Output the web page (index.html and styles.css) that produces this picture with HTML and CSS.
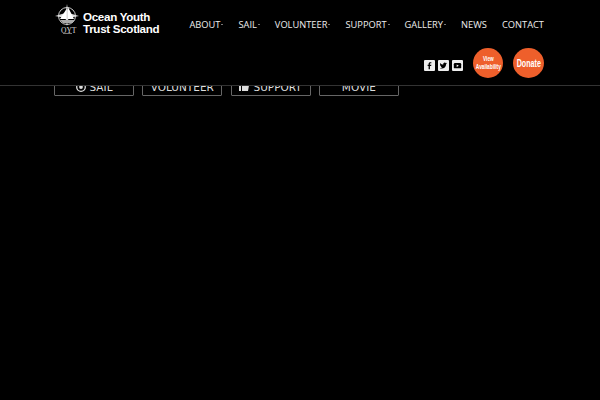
FILE: index.html
```html
<!DOCTYPE html>
<html lang="en">
<head>
  <meta charset="UTF-8">
  <title>Ocean Youth Trust Scotland</title>
  <link rel="stylesheet" href="styles.css">
</head>
<body>

  <header class="site-header">
    <div class="header-top">
      <a href="#" class="logo">
        <svg class="logo-mark" width="28" height="32" viewBox="0 0 28 32">
          <circle cx="13" cy="13" r="8.500" fill="none" stroke="#ccc" stroke-width="1"/>
          <path d="M13 1 L14.500 10 L25 13 L14.500 15 L13 23 L11.500 15 L1 13 L11.500 10 Z" fill="#ddd"/>
          <path d="M6 16 L12.500 6 L12.500 16 Z M14 4 L20 16 L14 16 Z" fill="#fff"/>
          <path d="M6 17 H21 L18 20 H9 Z" fill="#aaa"/>
          <path d="M9 30.500 H18" stroke="#777" stroke-width="1"/>
        </svg>
        <span class="logo-oyt">OYT</span>
        <span class="logo-name">Ocean Youth<br>Trust Scotland</span>
      </a>
      <nav class="main-nav">
        <a href="#" class="has-sub">ABOUT</a>
        <a href="#" class="has-sub">SAIL</a>
        <a href="#" class="has-sub">VOLUNTEER</a>
        <a href="#" class="has-sub">SUPPORT</a>
        <a href="#" class="has-sub">GALLERY</a>
        <a href="#">NEWS</a>
        <a href="#">CONTACT</a>
      </nav>
    </div>
    <div class="header-actions">
      <a href="#" class="social">
        <svg width="9" height="9" viewBox="0 0 11 11"><path d="M6 10V6h1.500l.3-1.500H6V3.600c0-.5.2-.8.8-.8h1V1.500H6.600C5.100 1.500 4.400 2.300 4.400 3.500v1H3.200V6h1.200v4Z" fill="#000"/></svg>
      </a>
      <a href="#" class="social">
        <svg width="9" height="9" viewBox="0 0 11 11"><path d="M10 2.800c-.4.200-.7.300-1.100.3.400-.2.700-.6.800-1-.4.200-.8.400-1.200.5a1.900 1.900 0 0 0-3.300 1.700C3.700 4.200 2.400 3.500 1.500 2.300c-.5.900-.2 2 .6 2.500-.3 0-.6-.1-.8-.2 0 .9.600 1.700 1.500 1.900-.3.100-.6.100-.9 0 .3.800 1 1.300 1.800 1.300-.8.600-1.800.9-2.800.8 2.800 1.700 7.600.5 7.900-4.900.4-.2.700-.6 1-1Z" fill="#000"/></svg>
      </a>
      <a href="#" class="social">
        <svg width="9" height="9" viewBox="0 0 11 11"><rect x="1" y="2.500" width="9" height="6.500" rx="1.500" fill="#000"/><path d="M4.500 4.200v3l2.600-1.500Z" fill="#fff"/></svg>
      </a>
      <a href="#" class="round-btn round-small"><span class="squeeze">View<br>Availability</span></a>
      <a href="#" class="round-btn round-large"><span class="squeeze">Donate</span></a>
    </div>
  </header>

  <div class="button-row">
    <a href="#" class="outline-btn">
      <svg width="10" height="10" viewBox="0 0 10 10"><circle cx="5" cy="5" r="4.300" fill="none" stroke="#ddd" stroke-width="1.300"/><circle cx="5" cy="5" r="1.900" fill="#ddd"/></svg>
      SAIL
    </a>
    <a href="#" class="outline-btn">VOLUNTEER</a>
    <a href="#" class="outline-btn">
      <svg width="10" height="10" viewBox="0 0 10 10"><path d="M0 4h2v5H0ZM3 4l2-3h1v2.500h4L9 9H3Z" fill="#ddd"/></svg>
      SUPPORT
    </a>
    <a href="#" class="outline-btn">MOVIE</a>
  </div>

</body>
</html>
```

FILE: styles.css
```css
body {
  margin: 0;
  background: #000;
  font-family: "DejaVu Sans", sans-serif;
  color: #ddd;
  height: 400px;
  overflow: hidden;
}
a { color: inherit; text-decoration: none; }

.site-header {
  position: absolute;
  top: 0;
  left: 0;
  width: 600px;
  height: 86px;
  box-sizing: border-box;
  padding: 0 56px 0 54px;
  background: #000;
  border-bottom: 1px solid #333;
}
.header-top {
  display: flex;
  justify-content: space-between;
  height: 48px;
}

.logo {
  position: relative;
  display: flex;
  align-items: center;
  width: 106px;
  height: 46px;
}
.logo-mark { flex: none; margin: 0 1px 8px 0; }
.logo-oyt {
  position: absolute;
  left: 7px;
  top: 26px;
  font: 7.500px "Liberation Serif", serif;
}
.logo-name {
  font: bold 11.600px/12px "Liberation Sans", sans-serif;
  letter-spacing: -0.3px;
  color: #fff;
  white-space: nowrap;
}

.main-nav {
  display: flex;
  gap: 15px;
  padding-top: 18px;
  font-family: "Open Sans", sans-serif;
  font-size: 9.300px;
  line-height: 13px;
  color: #eee;
}
.has-sub::after {
  content: "";
  display: inline-block;
  width: 2px;
  height: 1px;
  margin: 0 0 3px 1px;
  background: #777;
}

.header-actions {
  display: flex;
  justify-content: flex-end;
  align-items: center;
  height: 30px;
}
.social {
  display: flex;
  align-items: center;
  justify-content: center;
  width: 11px;
  height: 11px;
  margin: 4px 3px 0 0;
  background: #eee;
  border-radius: 1px;
}
.round-btn {
  display: flex;
  align-items: center;
  justify-content: center;
  width: 30px;
  height: 30px;
  border-radius: 50%;
  background: #ee5f2b;
  color: #fff;
  text-align: center;
  font-family: "Liberation Sans", sans-serif;
  font-weight: bold;
}
.squeeze { display: inline-block; white-space: nowrap; transform: scaleX(0.68); }
.round-small { margin-left: 7px; font-size: 7px; line-height: 8px; }
.round-large { margin-left: 10px; width: 31px; font-size: 10.500px; }

.button-row {
  display: flex;
  gap: 8.300px;
  padding: 78px 0 0 54px;
}
.outline-btn {
  display: flex;
  align-items: center;
  justify-content: center;
  gap: 4px;
  width: 80px;
  height: 18px;
  box-sizing: border-box;
  border: 1px solid #666;
  border-radius: 1px;
  font-size: 10.500px;
  line-height: 16px;
}
```
